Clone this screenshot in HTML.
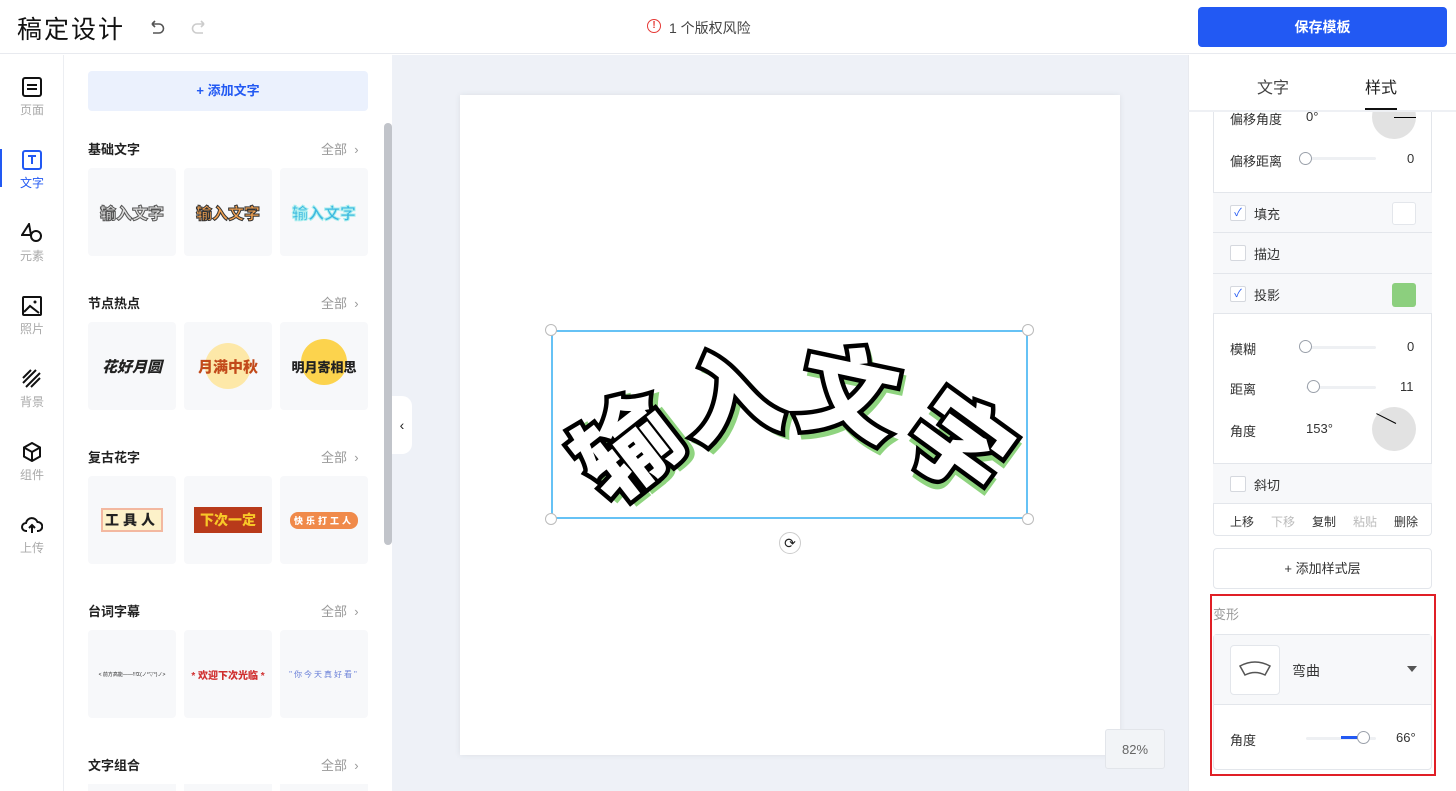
<!DOCTYPE html>
<html><head><meta charset="utf-8"><style>
*{box-sizing:border-box;margin:0;padding:0}
html,body{width:1456px;height:791px;overflow:hidden}
body{font-family:"Liberation Sans","Noto Sans CJK SC",sans-serif;background:#fff;position:relative;color:#222}
.a{position:absolute}
.hdr{left:0;top:0;width:1456px;height:54px;border-bottom:1px solid #e8eaef;background:#fff}
.nav{left:0;top:55px;width:64px;height:736px;border-right:1px solid #eceef2}
.ni{position:absolute;left:0;width:64px;text-align:center;font-size:12px;color:#aaa}
.ni svg{display:block;margin:0 auto 4px}
.st{font-size:13px;font-weight:bold;color:#222}
.all{font-size:13px;color:#999}
.th{position:absolute;width:88px;height:88px;background:#f7f8fa;border-radius:4px;display:flex;align-items:center;justify-content:center;font-weight:900;font-size:16px}
.lb{font-size:13px;color:#333}
.row{position:absolute;left:1213px;width:219px;background:#f7f8fa;border-top:1px solid #e3e6eb}
.cb{position:absolute;left:17px;width:16px;height:16px;border:1px solid #d5d8de;background:#fff;border-radius:2px}
.sl{position:absolute;height:3px;background:#eef0f3;border-radius:2px}
.kn{position:absolute;width:13px;height:13px;border:1px solid #9aa0aa;border-radius:50%;background:#fff}
.art text{font-family:"Noto Sans CJK SC",sans-serif;font-weight:900;font-size:98px}
</style></head><body>
<div class="a hdr"></div>
<div class="a" style="left:17px;top:10px;font-size:25px;letter-spacing:2px;color:#111">稿定设计</div>
<svg class="a" style="left:148px;top:20px" width="18" height="16" viewBox="0 0 18 16"><path d="M4 4h7a4.5 4.5 0 010 9H5M4 4l3-3M4 4l3 3" fill="none" stroke="#555" stroke-width="1.6"/></svg>
<svg class="a" style="left:190px;top:20px" width="18" height="16" viewBox="0 0 18 16"><path d="M14 4H7a4.5 4.5 0 000 9h6M14 4l-3-3M14 4l-3 3" fill="none" stroke="#ccc" stroke-width="1.6"/></svg>
<div class="a" style="left:647px;top:19px;width:14px;height:14px;border:1.5px solid #e53935;border-radius:50%;color:#e53935;font-size:10px;text-align:center;line-height:11px;font-weight:bold">!</div>
<div class="a" style="left:669px;top:18px;font-size:14px;color:#444">1 个版权风险</div>
<div class="a" style="left:1198px;top:7px;width:249px;height:40px;background:#2259f3;border-radius:4px;color:#fff;font-size:14px;font-weight:bold;text-align:center;line-height:40px">保存模板</div>

<div class="a nav"></div>
<div class="a" style="left:0;top:149px;width:2px;height:38px;background:#2259f3"></div>
<div class="ni" style="top:77px"><svg width="20" height="20"><rect x="1" y="1" width="18" height="18" rx="2" fill="none" stroke="#111" stroke-width="2"/><path d="M5 8h10M5 12h10" stroke="#111" stroke-width="2"/></svg>页面</div>
<div class="ni" style="top:150px;color:#2259f3"><svg width="20" height="20"><rect x="1" y="1" width="18" height="18" rx="2" fill="none" stroke="#2259f3" stroke-width="2"/><path d="M6 6h8M10 6v8" stroke="#2259f3" stroke-width="2"/></svg>文字</div>
<div class="ni" style="top:223px"><svg width="22" height="20"><path d="M8 1L1 12h9z" fill="none" stroke="#111" stroke-width="2"/><circle cx="15" cy="13" r="5" fill="#fff" stroke="#111" stroke-width="2"/></svg>元素</div>
<div class="ni" style="top:296px"><svg width="20" height="20"><rect x="1" y="1" width="18" height="18" rx="1" fill="none" stroke="#111" stroke-width="2"/><path d="M2 16l6-6 9 7" fill="none" stroke="#111" stroke-width="2"/><circle cx="13" cy="6" r="1.5" fill="#111"/></svg>照片</div>
<div class="ni" style="top:369px"><svg width="20" height="20"><path d="M1 9L9 1M1 14L14 1M4 18L18 4M9 18l9-9" stroke="#111" stroke-width="2"/></svg>背景</div>
<div class="ni" style="top:442px"><svg width="20" height="20"><path d="M10 1l8 4.5v9L10 19l-8-4.5v-9zM2 5.5L10 10l8-4.5M10 10v9" fill="none" stroke="#111" stroke-width="2"/></svg>组件</div>
<div class="ni" style="top:515px"><svg width="22" height="20"><path d="M6 16H5a4 4 0 010-8 6 6 0 0111.5-1A4.5 4.5 0 0117 16h-1M11 18v-8M8 13l3-3 3 3" fill="none" stroke="#111" stroke-width="2"/></svg>上传</div>

<div class="a" style="left:88px;top:71px;width:280px;height:40px;background:#ebf1fd;border-radius:4px;color:#2259f3;font-size:13px;font-weight:bold;text-align:center;line-height:40px">+ 添加文字</div>
<div class="a" style="left:384px;top:123px;width:8px;height:422px;background:#c1c4ca;border-radius:4px"></div>

<div class="a st" style="left:88px;top:139px">基础文字</div><div class="a all" style="left:321px;top:139px">全部 &nbsp;›</div>
<div class="th" style="left:88px;top:168px;color:#ddd;-webkit-text-stroke:1px #555">输入文字</div>
<div class="th" style="left:184px;top:168px;color:#f0a050;-webkit-text-stroke:1px #333">输入文字</div>
<div class="th" style="left:280px;top:168px;color:#3cb8e0;-webkit-text-stroke:1px #aee">输入文字</div>
<div class="a st" style="left:88px;top:293px">节点热点</div><div class="a all" style="left:321px;top:293px">全部 &nbsp;›</div>
<div class="th" style="left:88px;top:322px;font-size:15px;font-style:italic">花好月圆</div>
<div class="th" style="left:184px;top:322px;font-size:15px;color:#c24a1a"><span style="position:absolute;width:46px;height:46px;border-radius:50%;background:#fde8a8"></span><span style="position:relative">月满中秋</span></div>
<div class="th" style="left:280px;top:322px;font-size:13px"><span style="position:absolute;width:46px;height:46px;border-radius:50%;background:#fcd34d;top:17px"></span><span style="position:relative">明月寄相思</span></div>
<div class="a st" style="left:88px;top:447px">复古花字</div><div class="a all" style="left:321px;top:447px">全部 &nbsp;›</div>
<div class="th" style="left:88px;top:476px;font-size:14px"><span style="background:#fdf1c9;border:2px solid #f3b8a0;padding:0 2px;letter-spacing:4px">工具人</span></div>
<div class="th" style="left:184px;top:476px;font-size:14px"><span style="background:#b83a1a;color:#f8c828;padding:3px 6px">下次一定</span></div>
<div class="th" style="left:280px;top:476px;font-size:9px;color:#fff"><span style="background:#f08a4a;border-radius:8px;padding:2px 4px;letter-spacing:3px">快乐打工人</span></div>
<div class="a st" style="left:88px;top:601px">台词字幕</div><div class="a all" style="left:321px;top:601px">全部 &nbsp;›</div>
<div class="th" style="left:88px;top:630px;font-size:5px;font-weight:normal">&lt; 前方高能——!!!Σ(ノ°▽°)ノ&gt;</div>
<div class="th" style="left:184px;top:630px;font-size:10px;color:#d03030">* 欢迎下次光临 *</div>
<div class="th" style="left:280px;top:630px;font-size:8px;color:#6a80d8;font-weight:normal;letter-spacing:2px">"你今天真好看"</div>
<div class="a st" style="left:88px;top:755px">文字组合</div><div class="a all" style="left:321px;top:755px">全部 &nbsp;›</div>
<div class="a" style="left:88px;top:784px;width:88px;height:7px;background:#f7f8fa"></div><div class="a" style="left:184px;top:784px;width:88px;height:7px;background:#f7f8fa"></div><div class="a" style="left:280px;top:784px;width:88px;height:7px;background:#f7f8fa"></div>

<div class="a" style="left:392px;top:55px;width:796px;height:736px;background:#eef1f7"></div>
<div class="a" style="left:392px;top:396px;width:20px;height:58px;background:#fff;border-radius:0 10px 10px 0;font-size:14px;text-align:center;line-height:58px">‹</div>
<div class="a" style="left:460px;top:95px;width:660px;height:660px;background:#fff;box-shadow:0 0 6px rgba(0,0,0,.08)"></div>
<div class="a" style="left:1105px;top:729px;width:60px;height:40px;background:#f2f4f7;border:1px solid #e2e5ea;border-radius:3px;font-size:13px;color:#666;text-align:center;line-height:40px">82%</div>

<svg class="a art" style="left:0;top:0" width="1188" height="791">
<defs>
<g id="t1"><text x="0" y="34" text-anchor="middle">输</text></g>
<g id="t2"><text x="0" y="34" text-anchor="middle">入</text></g>
<g id="t3"><text x="0" y="34" text-anchor="middle">文</text></g>
<g id="t4"><text x="0" y="34" text-anchor="middle">字</text></g>
</defs>
<g transform="translate(628,448) rotate(-38)"><use href="#t1" x="4" y="5" fill="#8fd47f" stroke="#8fd47f" stroke-width="7"/><use href="#t1" fill="#000" stroke="#000" stroke-width="9"/><use href="#t1" fill="#fff"/></g>
<g transform="translate(732,398) rotate(-12)"><use href="#t2" x="4" y="5" fill="#8fd47f" stroke="#8fd47f" stroke-width="7"/><use href="#t2" fill="#000" stroke="#000" stroke-width="9"/><use href="#t2" fill="#fff"/></g>
<g transform="translate(848,396) rotate(12)"><use href="#t3" x="4" y="5" fill="#8fd47f" stroke="#8fd47f" stroke-width="7"/><use href="#t3" fill="#000" stroke="#000" stroke-width="9"/><use href="#t3" fill="#fff"/></g>
<g transform="translate(958,446) rotate(36)"><use href="#t4" x="4" y="5" fill="#8fd47f" stroke="#8fd47f" stroke-width="7"/><use href="#t4" fill="#000" stroke="#000" stroke-width="9"/><use href="#t4" fill="#fff"/></g>
</svg>
<div class="a" style="left:551px;top:330px;width:477px;height:189px;border:2px solid #66c2f5"></div>
<div class="a" style="left:545px;top:324px;width:12px;height:12px;border:1px solid #bbb;border-radius:50%;background:#fff"></div>
<div class="a" style="left:1022px;top:324px;width:12px;height:12px;border:1px solid #bbb;border-radius:50%;background:#fff"></div>
<div class="a" style="left:545px;top:513px;width:12px;height:12px;border:1px solid #bbb;border-radius:50%;background:#fff"></div>
<div class="a" style="left:1022px;top:513px;width:12px;height:12px;border:1px solid #bbb;border-radius:50%;background:#fff"></div>
<div class="a" style="left:779px;top:532px;width:22px;height:22px;border:1px solid #ccc;border-radius:50%;background:#fff;font-size:14px;text-align:center;line-height:20px">⟳</div>

<div class="a" style="left:1188px;top:55px;width:268px;height:736px;background:#fff;border-left:1px solid #e8eaef"></div>
<div class="a" style="left:1213px;top:112px;width:219px;height:424px;border:1px solid #e3e6eb;border-top:none;border-radius:0 0 4px 4px"></div>
<div class="a lb" style="left:1230px;top:109px">偏移角度</div><div class="a lb" style="left:1306px;top:109px">0°</div>
<div class="a" style="left:1372px;top:95px;width:44px;height:44px;border-radius:50%;background:#e2e2e2"></div>
<div class="a" style="left:1394px;top:117px;width:22px;height:1px;background:#000"></div>
<div class="a" style="left:1189px;top:55px;width:267px;height:55px;background:#fff"></div>
<div class="a" style="left:1257px;top:74px;font-size:16px;color:#444">文字</div>
<div class="a" style="left:1365px;top:74px;font-size:16px;color:#222">样式</div>
<div class="a" style="left:1365px;top:108px;width:32px;height:2px;background:#111"></div>
<div class="a" style="left:1188px;top:110px;width:268px;height:2px;background:#eef0f4"></div>
<div class="a lb" style="left:1230px;top:151px">偏移距离</div><div class="sl" style="left:1306px;top:157px;width:70px"></div><div class="kn" style="left:1299px;top:152px"></div><div class="a lb" style="left:1407px;top:151px">0</div>
<div class="row" style="top:192px;height:40px"><div class="cb" style="top:12px;color:#2259f3;font-size:11px;text-align:center;line-height:14px">✓</div><div class="a lb" style="left:41px;top:11px">填充</div><div class="a" style="left:179px;top:9px;width:24px;height:23px;background:#fff;border:1px solid #e3e6eb;border-radius:3px"></div></div>
<div class="row" style="top:232px;height:41px"><div class="cb" style="top:12px"></div><div class="a lb" style="left:41px;top:11px">描边</div></div>
<div class="row" style="top:273px;height:41px;border-bottom:1px solid #e3e6eb"><div class="cb" style="top:12px;color:#2259f3;font-size:11px;text-align:center;line-height:14px">✓</div><div class="a lb" style="left:41px;top:11px">投影</div><div class="a" style="left:179px;top:9px;width:24px;height:24px;background:#8ccf7e;border-radius:3px"></div></div>
<div class="a lb" style="left:1230px;top:339px">模糊</div><div class="sl" style="left:1306px;top:346px;width:70px"></div><div class="kn" style="left:1299px;top:340px"></div><div class="a lb" style="left:1407px;top:339px">0</div>
<div class="a lb" style="left:1230px;top:379px">距离</div><div class="sl" style="left:1306px;top:386px;width:70px"></div><div class="kn" style="left:1307px;top:380px"></div><div class="a lb" style="left:1400px;top:379px">11</div>
<div class="a lb" style="left:1230px;top:421px">角度</div><div class="a lb" style="left:1306px;top:421px">153°</div>
<div class="a" style="left:1372px;top:407px;width:44px;height:44px;border-radius:50%;background:#e2e2e2"></div>
<div class="a" style="left:1374px;top:423px;width:22px;height:1px;background:#000;transform:rotate(27deg);transform-origin:right center"></div>
<div class="row" style="top:463px;height:41px;border-bottom:1px solid #e3e6eb"><div class="cb" style="top:12px"></div><div class="a lb" style="left:41px;top:11px">斜切</div></div>
<div class="a" style="left:1230px;top:513px;font-size:12px;color:#333;width:188px;display:flex;justify-content:space-between"><span>上移</span><span style="color:#bbb">下移</span><span>复制</span><span style="color:#bbb">粘贴</span><span>删除</span></div>
<div class="a" style="left:1213px;top:548px;width:219px;height:41px;border:1px solid #e3e6eb;border-radius:4px;font-size:13px;text-align:center;line-height:40px;color:#333">+ 添加样式层</div>
<div class="a" style="left:1210px;top:594px;width:226px;height:182px;border:2px solid #e01f26"></div>
<div class="a" style="left:1213px;top:604px;font-size:13px;color:#999">变形</div>
<div class="a" style="left:1213px;top:634px;width:219px;height:136px;border:1px solid #e3e6eb;border-radius:4px"></div>
<div class="a" style="left:1214px;top:635px;width:217px;height:70px;background:#f7f8fa;border-bottom:1px solid #e3e6eb"></div>
<div class="a" style="left:1230px;top:645px;width:50px;height:50px;background:#fff;border:1px solid #e3e6eb;border-radius:4px"></div>
<svg class="a" style="left:1238px;top:660px" width="34" height="20"><path d="M2 6Q17-2 32 6L27 15Q17 10 7 15Z" fill="none" stroke="#555" stroke-width="1.5"/></svg>
<div class="a" style="left:1292px;top:661px;font-size:14px;color:#333">弯曲</div>
<div class="a" style="left:1407px;top:666px;border:5px solid transparent;border-top:6px solid #555"></div>
<div class="a lb" style="left:1230px;top:730px">角度</div>
<div class="sl" style="left:1306px;top:737px;width:70px"></div><div class="a" style="left:1341px;top:736px;width:20px;height:3px;background:#2259f3"></div><div class="kn" style="left:1357px;top:731px"></div>
<div class="a lb" style="left:1396px;top:730px">66°</div>
</body></html>
